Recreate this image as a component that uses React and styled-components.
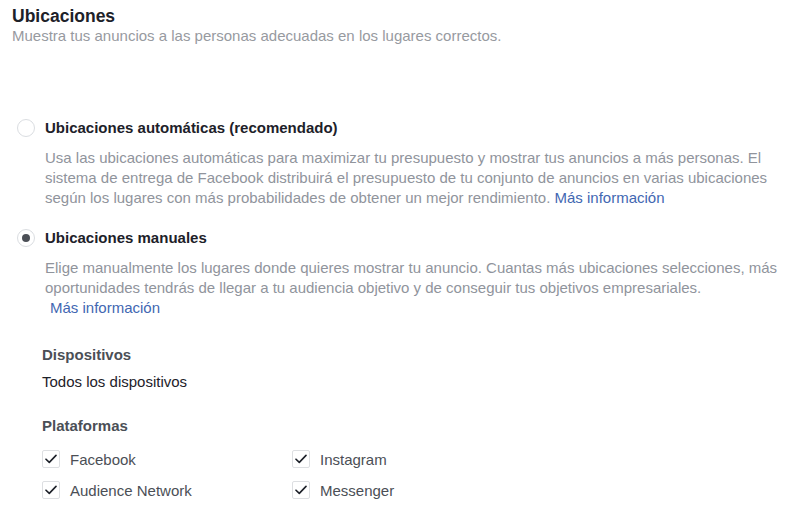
import React from "react";
import styled, { createGlobalStyle } from "styled-components";

const Global = createGlobalStyle`
  html, body { margin: 0; padding: 0; background: #ffffff; }
  body { font-family: "Liberation Sans", Arial, Helvetica, sans-serif; color: #1d2129; }
`;

const Page = styled.div`
  padding: 6px 12px 0 12px;
`;

const Title = styled.h2`
  margin: 0;
  font-size: 17.5px;
  line-height: 20px;
  font-weight: 700;
  color: #1d2129;
`;

const Subtitle = styled.p`
  margin: 0;
  font-size: 15px;
  line-height: 20px;
  color: #979a9f;
`;

const Options = styled.div`
  margin-top: 72px;
  display: flex;
  flex-direction: column;
  gap: 20px;
`;

const Option = styled.div`
  display: grid;
  grid-template-columns: 33px 1fr;
  row-gap: 10px;
`;

const Radio = styled.span`
  margin-left: 5px;
  margin-top: 1px;
  width: 18px;
  height: 18px;
  box-sizing: border-box;
  border-radius: 50%;
  border: 1px solid #dadde1;
  background: #fff;
  display: flex;
  align-items: center;
  justify-content: center;
  &::after {
    content: "";
    width: 8px;
    height: 8px;
    border-radius: 50%;
    background: ${(p) => (p.$checked ? "#4b4f56" : "transparent")};
  }
`;

const OptionLabel = styled.div`
  font-size: 15px;
  line-height: 20px;
  font-weight: 700;
  color: #1d2129;
`;

const Description = styled.div`
  grid-column: 2;
  font-size: 15px;
  line-height: 20px;
  color: #90949c;
  white-space: nowrap;
`;

const Link = styled.a`
  color: #4267b2;
  text-decoration: none;
  margin-left: ${(p) => p.$indent || 0}px;
`;

const Section = styled.div`
  padding-left: 30px;
  margin-top: ${(p) => p.$top}px;
`;

const SectionTitle = styled.div`
  font-size: 15px;
  line-height: 20px;
  font-weight: 700;
  color: #4b4f56;
`;

const SectionValue = styled.div`
  margin-top: 7px;
  font-size: 15px;
  line-height: 20px;
  color: #1d2129;
`;

const CheckGrid = styled.div`
  margin-top: 14px;
  display: grid;
  grid-template-columns: 250px 250px;
  row-gap: 11px;
`;

const CheckItem = styled.label`
  display: flex;
  align-items: center;
  gap: 10px;
  font-size: 15px;
  line-height: 20px;
  color: #4b4f56;
`;

const Box = styled.span`
  width: 18px;
  height: 18px;
  box-sizing: border-box;
  border: 1px solid #dddfe2;
  border-radius: 2px;
  display: flex;
  align-items: center;
  justify-content: center;
  margin-top: -2px;
`;

const Check = () => (
  <svg width="12" height="10" viewBox="0 0 12 10" fill="none">
    <path d="M1 5.2 L4.3 8.4 L11 1.4" stroke="#1d2129" strokeWidth="1.6" strokeLinecap="round" strokeLinejoin="round" />
  </svg>
);

const platforms = ["Facebook", "Instagram", "Audience Network", "Messenger"];

export default function App() {
  return (
    <Page>
      <Global />
      <Title>Ubicaciones</Title>
      <Subtitle>Muestra tus anuncios a las personas adecuadas en los lugares correctos.</Subtitle>

      <Options>
        <Option>
          <Radio />
          <OptionLabel>Ubicaciones automáticas (recomendado)</OptionLabel>
          <Description>
            Usa las ubicaciones automáticas para maximizar tu presupuesto y mostrar tus anuncios a más personas. El
            <br />
            sistema de entrega de Facebook distribuirá el presupuesto de tu conjunto de anuncios en varias ubicaciones
            <br />
            según los lugares con más probabilidades de obtener un mejor rendimiento. <Link href="#">Más información</Link>
          </Description>
        </Option>
        <Option>
          <Radio $checked />
          <OptionLabel>Ubicaciones manuales</OptionLabel>
          <Description>
            Elige manualmente los lugares donde quieres mostrar tu anuncio. Cuantas más ubicaciones selecciones, más
            <br />
            oportunidades tendrás de llegar a tu audiencia objetivo y de conseguir tus objetivos empresariales.
            <br />
            <Link href="#" $indent={5}>Más información</Link>
          </Description>
        </Option>
      </Options>

      <Section $top={27}>
        <SectionTitle>Dispositivos</SectionTitle>
        <SectionValue>Todos los dispositivos</SectionValue>
      </Section>

      <Section $top={24}>
        <SectionTitle>Plataformas</SectionTitle>
        <CheckGrid>
          {platforms.map((name) => (
            <CheckItem key={name}>
              <Box>
                <Check />
              </Box>
              {name}
            </CheckItem>
          ))}
        </CheckGrid>
      </Section>
    </Page>
  );
}
